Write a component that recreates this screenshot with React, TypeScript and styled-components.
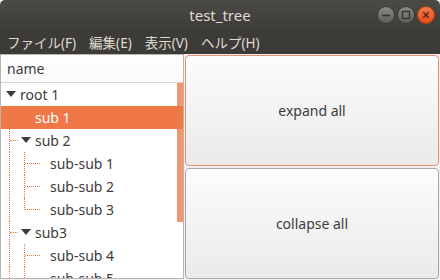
import styled, { createGlobalStyle } from 'styled-components';

const GlobalStyle = createGlobalStyle`
    html, body {
        margin: 0;
        padding: 0;
        width: 440px;
        height: 280px;
        overflow: hidden;
        background: #f2f1f0;
    }
    * {
        box-sizing: border-box;
    }
`;

type Guide = 'line' | 'branch' | 'last';

type Row = {
    label: string;
    guides: Guide[];
    expander?: boolean;
    selected?: boolean;
};

const rows: Row[] = [
    { label: 'root 1', guides: [], expander: true },
    { label: 'sub 1', guides: ['branch'], selected: true },
    { label: 'sub 2', guides: ['branch'], expander: true },
    { label: 'sub-sub 1', guides: ['line', 'branch'] },
    { label: 'sub-sub 2', guides: ['line', 'branch'] },
    { label: 'sub-sub 3', guides: ['line', 'last'] },
    { label: 'sub3', guides: ['branch'], expander: true },
    { label: 'sub-sub 4', guides: ['line', 'branch'] },
    { label: 'sub-sub 5', guides: ['line', 'branch'] },
];

const menus = ['ファイル(F)', '編集(E)', '表示(V)', 'ヘルプ(H)'];

const App = () => {
    return (
        <>
            <GlobalStyle />
            <Window>
                <TitleBar>
                    <span />
                    <Title>test_tree</Title>
                    <Controls>
                        <WinButton>
                            <svg width="10" height="10" viewBox="0 0 10 10">
                                <path d="M1 5.5h8" stroke="#34332f" strokeWidth="1.6" />
                            </svg>
                        </WinButton>
                        <WinButton>
                            <svg width="10" height="10" viewBox="0 0 10 10">
                                <rect x="1.5" y="1.5" width="7" height="7" fill="none" stroke="#34332f" strokeWidth="1.4" />
                            </svg>
                        </WinButton>
                        <WinButton $close>
                            <svg width="10" height="10" viewBox="0 0 10 10">
                                <path d="M2.3 2.3l5.4 5.4M7.7 2.3l-5.4 5.4" stroke="#5a2210" strokeWidth="1.5" />
                            </svg>
                        </WinButton>
                    </Controls>
                </TitleBar>
                <MenuBar>
                    {menus.map((m) => (
                        <MenuItem key={m}>{m}</MenuItem>
                    ))}
                </MenuBar>
                <Content>
                    <TreeView>
                        <Header>name</Header>
                        <TreeBody>
                            {rows.map((row) => (
                                <TreeRow key={row.label} $selected={row.selected}>
                                    {row.guides.map((g, i) => (
                                        <GuideCell
                                            key={i}
                                            $kind={g}
                                            $leaf={!row.expander}
                                            $hidden={row.selected}
                                        />
                                    ))}
                                    <Expander>{row.expander && <Triangle />}</Expander>
                                    <Label>{row.label}</Label>
                                </TreeRow>
                            ))}
                            <Scrollbar />
                        </TreeBody>
                    </TreeView>
                    <ButtonColumn>
                        <Button $focused>expand all</Button>
                        <Button>collapse all</Button>
                    </ButtonColumn>
                </Content>
            </Window>
        </>
    );
};

export default App;

const Window = styled.div`
    width: 440px;
    height: 280px;
    display: flex;
    flex-direction: column;
    font-family: "Noto Sans", "Noto Sans CJK JP", sans-serif;
    background: #f2f1f0;
`;

const TitleBar = styled.div`
    height: 32px;
    display: grid;
    grid-template-columns: 1fr auto 1fr;
    align-items: center;
    background: linear-gradient(#4b4a45, #3c3b37);
    border-radius: 5px 5px 0 0;
`;

const Title = styled.div`
    color: #dfdbd2;
    font-size: 15px;
    line-height: 18px;
    margin-top: -2px;
`;

const Controls = styled.div`
    justify-self: end;
    display: flex;
    gap: 2px;
    padding-right: 5px;
    margin-top: -2px;
`;

const WinButton = styled.div<{ $close?: boolean }>`
    width: 18px;
    height: 18px;
    border-radius: 50%;
    display: flex;
    align-items: center;
    justify-content: center;
    border: 1px solid ${(p) => (p.$close ? '#b43c12' : '#3a3935')};
    background: ${(p) =>
        p.$close
            ? 'linear-gradient(#f47a4a, #e4501c)'
            : 'linear-gradient(#8a8984, #5f5e5a)'};
`;

const MenuBar = styled.div`
    height: 22px;
    display: flex;
    align-items: center;
    background: #3c3b37;
    padding-left: 1px;
`;

const MenuItem = styled.div`
    color: #dfdbd2;
    font-size: 13.5px;
    padding: 0 6px;
    margin-right: 1px;
    line-height: 20px;
`;

const Content = styled.div`
    flex: 1;
    display: flex;
    gap: 1px;
    padding: 0 1px 1px 0;
    min-height: 0;
`;

const TreeView = styled.div`
    width: 184px;
    display: flex;
    flex-direction: column;
    background: #ffffff;
    border: 1px solid #b9b6b1;
    overflow: hidden;
`;

const Header = styled.div`
    height: 28px;
    flex-shrink: 0;
    padding-left: 6px;
    display: flex;
    align-items: center;
    font-size: 14px;
    color: #3c3c3c;
    border-bottom: 1px solid #d9d7d3;
    background: linear-gradient(#ffffff, #f9f9f8);
`;

const TreeBody = styled.div`
    position: relative;
    flex: 1;
    overflow: hidden;
`;

const TreeRow = styled.div<{ $selected?: boolean }>`
    height: 23px;
    display: flex;
    align-items: stretch;
    padding-left: 2px;
    background: ${(p) => (p.$selected ? '#f07746' : 'transparent')};
    color: ${(p) => (p.$selected ? '#ffffff' : '#3c3c3c')};
`;

const GuideCell = styled.div<{ $kind: Guide; $leaf: boolean; $hidden?: boolean }>`
    position: relative;
    width: 15px;
    flex-shrink: 0;
    visibility: ${(p) => (p.$hidden ? 'hidden' : 'visible')};

    &::before {
        content: '';
        position: absolute;
        left: 6px;
        top: 0;
        height: ${(p) => (p.$kind === 'last' ? '12px' : '100%')};
        border-left: 1px dotted #f07746;
    }

    &::after {
        content: '';
        display: ${(p) => (p.$kind === 'line' ? 'none' : 'block')};
        position: absolute;
        left: 7px;
        top: 11px;
        width: ${(p) => (p.$leaf ? '15px' : '8px')};
        border-top: 1px dotted #f07746;
    }
`;

const Expander = styled.div`
    width: 15px;
    flex-shrink: 0;
    display: flex;
    align-items: center;
    justify-content: center;
`;

const Triangle = styled.div`
    width: 0;
    height: 0;
    margin-top: -2px;
    border-left: 5px solid transparent;
    border-right: 5px solid transparent;
    border-top: 6px solid #3c3c3c;
`;

const Label = styled.div`
    margin-left: 2px;
    font-size: 14px;
    line-height: 23px;
    white-space: nowrap;
`;

const Scrollbar = styled.div`
    position: absolute;
    top: 0;
    right: 0;
    width: 6px;
    height: 139px;
    background: rgba(240, 119, 70, 0.78);
`;

const ButtonColumn = styled.div`
    flex: 1;
    display: flex;
    flex-direction: column;
    gap: 2px;
    padding-top: 1px;
`;

const Button = styled.div<{ $focused?: boolean }>`
    flex: 1;
    display: flex;
    align-items: center;
    justify-content: center;
    border-radius: 4px;
    border: 1px solid ${(p) => (p.$focused ? '#e39172' : '#a9a8a6')};
    background: linear-gradient(#fcfcfc, #ebeae9);
    color: #3c3c3c;
    font-size: 14px;
`;
